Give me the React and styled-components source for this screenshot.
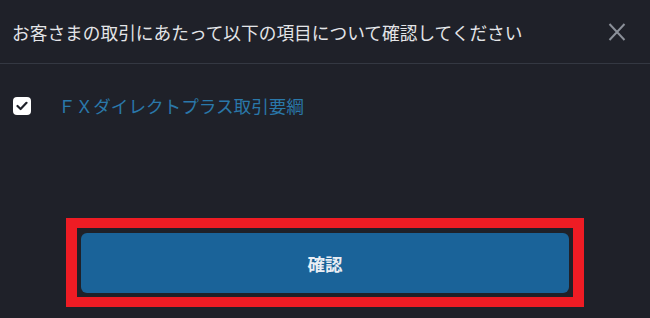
import styled, { createGlobalStyle } from "styled-components";

const GlobalStyle = createGlobalStyle`
  html, body {
    margin: 0;
    padding: 0;
    background: #1f2129;
  }
  * {
    box-sizing: border-box;
  }
`;

const Modal = styled.div`
  width: 650px;
  height: 318px;
  display: flex;
  flex-direction: column;
  background: #1f2129;
  font-family: "Noto Sans CJK JP", "Noto Sans", sans-serif;
`;

const Header = styled.div`
  height: 64px;
  display: flex;
  align-items: center;
  justify-content: space-between;
  padding: 1px 24px 0 12px;
  border-bottom: 1px solid #343842;
`;

const Title = styled.h2`
  margin: 0;
  font-size: 17.7px;
  font-weight: 400;
  color: #e4e5e8;
  letter-spacing: 0;
`;

const CloseButton = styled.button`
  display: flex;
  align-items: center;
  justify-content: center;
  padding: 0;
  border: none;
  background: none;
  cursor: pointer;
  svg {
    display: block;
  }
`;

const Body = styled.div`
  padding: 29px 13px 0;
`;

const CheckRow = styled.label`
  display: flex;
  align-items: center;
  gap: 27px;
  cursor: pointer;
`;

const CheckBox = styled.span`
  width: 18px;
  height: 18px;
  border-radius: 4px;
  background: #ffffff;
  display: flex;
  align-items: center;
  justify-content: center;
`;

const LinkText = styled.a`
  font-size: 17.6px;
  color: #2a78aa;
  text-decoration: none;
`;

const Footer = styled.div`
  margin-top: auto;
  padding: 0 66px 11px;
`;

const Highlight = styled.div`
  border: solid #ee1c24;
  border-width: 10px 11px;
  padding: 5px 4px 4px;
`;

const ConfirmButton = styled.button`
  width: 100%;
  height: 60px;
  border: none;
  border-radius: 6px;
  background: #1a6399;
  color: #e9eef4;
  font-family: inherit;
  font-size: 17.5px;
  font-weight: 700;
  cursor: pointer;
`;

export default function App() {
  return (
    <>
      <GlobalStyle />
      <Modal>
        <Header>
          <Title>お客さまの取引にあたって以下の項目について確認してください</Title>
          <CloseButton aria-label="close">
            <svg width="18" height="18" viewBox="0 0 18 18">
              <path d="M1.5 1 L16.5 17 M16.5 1 L1.5 17" stroke="#8b9099" strokeWidth="2" fill="none" />
            </svg>
          </CloseButton>
        </Header>
        <Body>
          <CheckRow>
            <CheckBox>
              <svg width="12" height="10" viewBox="0 0 12 10">
                <path d="M1.5 5 L4.6 8 L10.5 1.8" stroke="#1f2129" strokeWidth="2.2" fill="none" strokeLinecap="round" strokeLinejoin="round" />
              </svg>
            </CheckBox>
            <LinkText href="#">ＦＸダイレクトプラス取引要綱</LinkText>
          </CheckRow>
        </Body>
        <Footer>
          <Highlight>
            <ConfirmButton>確認</ConfirmButton>
          </Highlight>
        </Footer>
      </Modal>
    </>
  );
}
